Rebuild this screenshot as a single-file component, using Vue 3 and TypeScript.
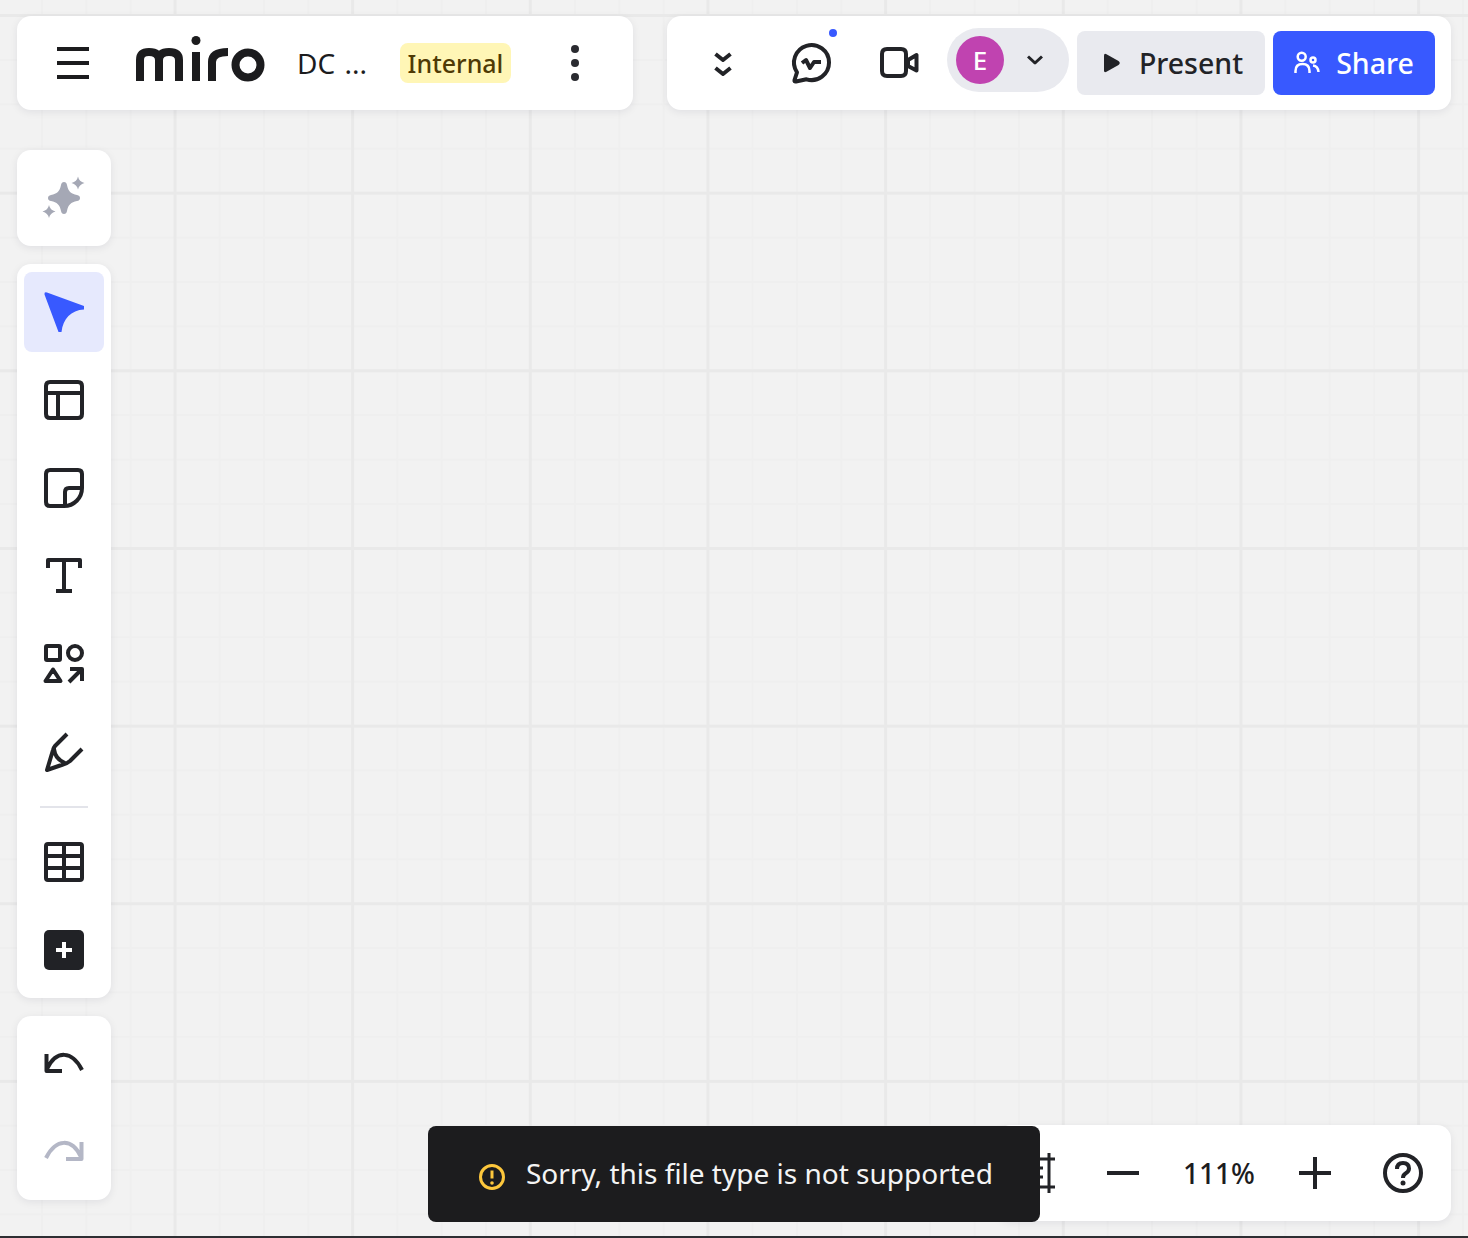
<script setup lang="ts">
interface Tool {
  id: string
  d: string
}

const tools: Tool[] = [
  { id: 'frame', d: 'M6 2H34Q38 2 38 6V34Q38 38 34 38H6Q2 38 2 34V6Q2 2 6 2ZM2 13H38M14 13V38' },
  { id: 'sticky', d: 'M6 2H34Q38 2 38 6V20C38 30 30 38 20 38H6Q2 38 2 34V6Q2 2 6 2ZM38 20H25Q21 20 21 24V38' },
  { id: 'text', d: 'M4 12V4H36V12M20 4V35M12 35H28' },
  { id: 'shapes', d: 'M3 2H15Q16 2 16 3V15Q16 16 15 16H3Q2 16 2 15V3Q2 2 3 2ZM38 9A7 7 0 1 1 24 9A7 7 0 1 1 38 9ZM9 25.5L16.5 37H1.5ZM25 38L38 25M26 25H38V37' },
  { id: 'pen', d: 'M23 2L11 14Q9.500 16 9 18L3 38L19 32.500Q23 31.500 26 29L38 17M10 17Q11 27 21 31' },
]
</script>

<template>
  <div class="board">
    <header class="top-row">
      <div class="panel board-bar">
        <svg class="menu-icon" width="48" height="48" viewBox="0 0 48 48">
          <path d="M8 10H40M8 24H40M8 38H40" />
        </svg>
        <svg class="logo" width="130" height="48" viewBox="0 0 130 48" role="img" aria-label="miro">
          <path d="M5 45V24Q5 16 14 16Q24 16 24 24V45M24 24Q24 16 34 16Q44 16 44 24V45M61 16V45M77 45V26Q77 16 93 16" />
          <circle cx="113" cy="29" r="12.5" />
          <circle class="logo-dot" cx="61" cy="4.5" r="4.5" />
        </svg>
        <span class="title">DC ...</span>
        <span class="badge">Internal</span>
        <svg class="dots" width="48" height="48" viewBox="0 0 48 48">
          <circle cx="24" cy="10" r="4" />
          <circle cx="24" cy="24" r="4" />
          <circle cx="24" cy="38" r="4" />
        </svg>
      </div>

      <div class="panel collab-bar">
        <div class="cell">
          <svg class="line-icon" width="48" height="48" viewBox="0 0 48 48">
            <path d="M16.500 15L24 21L31.500 15M16.500 29L24 35L31.500 29" />
          </svg>
        </div>
        <div class="cell">
          <svg class="line-icon" width="48" height="48" viewBox="0 0 48 48">
            <path d="M10 33.300A17.500 17.500 0 1 1 19.500 40.300L9 42.500Q7 43 7.500 41L10 33.300ZM15 24L19 21L23 29L27 23H34" />
          </svg>
          <span class="notify-dot"></span>
        </div>
        <div class="cell">
          <svg class="line-icon" width="48" height="48" viewBox="0 0 48 48">
            <path d="M12 10H26Q31 10 31 15V32Q31 37 26 37H12Q7 37 7 32V15Q7 10 12 10ZM33 21L41.500 16V31.500L33 27Z" />
          </svg>
        </div>
        <div class="user-pill">
          <span class="avatar">E</span>
          <svg class="line-icon small" width="16" height="10" viewBox="0 0 16 10">
            <path d="M1 1.5L8 8L15 1.5" />
          </svg>
        </div>
        <button class="btn present">
          <svg width="18" height="20" viewBox="0 0 18 20">
            <path d="M1 2.5Q1 0 3.500 1.200L15.500 8Q18 10 15.500 12L3.500 18.800Q1 20 1 17.500Z" />
          </svg>
          Present
        </button>
        <button class="btn share">
          <svg width="26" height="26" viewBox="0 0 26 26">
            <circle cx="7.700" cy="6.700" r="4" />
            <circle cx="19" cy="10" r="2.500" />
            <path d="M1.500 23V21Q1.500 14 8.500 14Q15.500 14 15.500 21V23M19 15.500Q24 16 24.500 22" />
          </svg>
          Share
        </button>
      </div>
    </header>

    <main class="canvas">
      <aside class="toolbars">
        <div class="panel tool-group">
          <div class="tool">
            <svg width="40" height="40" viewBox="0 0 40 40">
              <path
                fill="#a5a8b5"
                d="M20 4Q22.500 4 23 7C24 13 27 16 33 17Q36 17.500 36 20Q36 22.500 33 23C27 24 24 27 23 33Q22.500 36 20 36Q17.500 36 17 33C16 27 13 24 7 23Q4 22.500 4 20Q4 17.500 7 17C13 16 16 13 17 7Q17.500 4 20 4ZM34 -1.500Q35 3.500 40.500 5Q35 6.500 34 11.500Q33 6.500 27.500 5Q33 3.500 34 -1.500ZM5 27Q6 32 11.500 33.500Q6 35 5 40Q4 35 -1.500 33.500Q4 32 5 27Z"
              />
            </svg>
          </div>
        </div>

        <div class="panel tool-group">
          <div class="tool active">
            <svg width="40" height="40" viewBox="0 0 40 40">
              <path fill="#3859ff" d="M0.500 2.500Q0 -0.500 3 0.500L40 14V17.500C27 18 19 27 17.500 40H14.500Z" />
            </svg>
          </div>
          <div v-for="tool in tools" :key="tool.id" class="tool">
            <svg class="stroke-icon" width="40" height="40" viewBox="0 0 40 40">
              <path :d="tool.d" />
            </svg>
          </div>
          <div class="divider"></div>
          <div class="tool">
            <svg class="stroke-icon" width="40" height="40" viewBox="0 0 40 40">
              <path d="M4 2H36Q38 2 38 4V36Q38 38 36 38H4Q2 38 2 36V4Q2 2 4 2ZM2 14H38M2 26H38M20 2V38" />
            </svg>
          </div>
          <div class="tool">
            <svg width="40" height="40" viewBox="0 0 40 40">
              <rect width="40" height="40" rx="5" fill="#212226" />
              <path d="M12 20H28M20 12V28" stroke="#fff" stroke-width="4" />
            </svg>
          </div>
        </div>

        <div class="panel tool-group">
          <div class="tool">
            <svg class="stroke-icon" width="40" height="40" viewBox="0 0 40 40">
              <path d="M2.500 10V27H18M3 25C12 6 28 6 38 26" />
            </svg>
          </div>
          <div class="tool">
            <svg class="stroke-icon muted" width="40" height="40" viewBox="0 0 40 40">
              <path d="M37.500 10V27H22M37 25C28 6 12 6 2 26" />
            </svg>
          </div>
        </div>
      </aside>

      <div class="panel zoom-bar">
        <div class="zoom-cell fit">
          <svg class="line-icon thin" width="40" height="40" viewBox="0 0 40 40">
            <path d="M31 0V40M3 6H37M3 34H37M3 15H25M3 24H25" />
          </svg>
        </div>
        <div class="zoom-cell">
          <svg class="line-icon" width="40" height="40" viewBox="0 0 40 40">
            <path d="M4 20H36" />
          </svg>
        </div>
        <span class="zoom-value">111%</span>
        <div class="zoom-cell">
          <svg class="line-icon" width="40" height="40" viewBox="0 0 40 40">
            <path d="M4 20H36M20 4V36" />
          </svg>
        </div>
        <div class="zoom-cell">
          <svg class="line-icon" width="40" height="40" viewBox="0 0 40 40">
            <circle cx="20" cy="20" r="18" />
            <path d="M14 16Q14 10 20 10Q26 10 26 15.500Q26 18.500 22.500 20.500Q20 22 20 25" />
            <circle class="solid" cx="20" cy="30" r="2.500" />
          </svg>
        </div>
      </div>
    </main>

    <div class="toast">
      <svg width="28" height="28" viewBox="0 0 28 28">
        <circle cx="14" cy="14" r="11.500" />
        <path d="M14 7.500V15.500" />
        <circle class="solid" cx="14" cy="20" r="1.800" />
      </svg>
      <span>Sorry, this file type is not supported</span>
    </div>
  </div>
  <div class="edge"></div>
</template>

<style scoped>
.board {
  position: relative;
  width: 1468px;
  height: 1236px;
  box-sizing: border-box;
  padding: 16px 17px 15px;
  display: flex;
  flex-direction: column;
  overflow: hidden;
  font-family: "Noto Sans", sans-serif;
  color: #1c1c1e;
  background-color: #f2f2f2;
  background-image:
    linear-gradient(to right, #e9e9e9 3px, transparent 3px),
    linear-gradient(to bottom, #e9e9e9 3px, transparent 3px),
    linear-gradient(to right, #efefef 2px, transparent 2px),
    linear-gradient(to bottom, #efefef 2px, transparent 2px);
  background-size: 177.66px 177.66px, 177.66px 177.66px, 44.415px 44.415px, 44.415px 44.415px;
  background-position: 173.500px 0, 0 14px, 41px 0, 0 14.500px;
}

.edge {
  height: 2px;
  background: #2e2f33;
}

.panel {
  background: #fff;
  border-radius: 14px;
  box-shadow: 0 2px 8px rgba(5, 0, 56, 0.08);
}

.top-row {
  display: flex;
  justify-content: space-between;
}

.board-bar,
.collab-bar {
  height: 94px;
  display: flex;
  align-items: center;
}

.board-bar {
  width: 616px;
  padding-left: 32px;
  box-sizing: border-box;
}

.menu-icon path {
  stroke: #1c1c1e;
  stroke-width: 4;
  fill: none;
}

.logo {
  margin-left: 38px;
  margin-top: -7px;
  margin-right: 1px;
  overflow: visible;
}

.logo path,
.logo circle {
  fill: none;
  stroke: #1c1c1e;
  stroke-width: 8;
}

.logo .logo-dot {
  fill: #1c1c1e;
  stroke: none;
}

.title {
  width: 70px;
  margin-left: 31px;
  margin-right: 1px;
  font-size: 28px;
  word-spacing: 2px;
  white-space: nowrap;
}

.badge {
  margin-left: 32px;
  width: 111px;
  height: 40px;
  line-height: 40px;
  text-align: center;
  background: #fff6b6;
  border-radius: 8px;
  font-size: 25px;
  font-weight: 500;
  color: #4f3a05;
}

.dots {
  margin-left: 40px;
  fill: #2a2b30;
}

.collab-bar {
  width: 784px;
  padding: 0 16px;
  box-sizing: border-box;
  gap: 8px;
}

.cell {
  position: relative;
  flex: none;
  width: 80px;
  height: 80px;
  display: flex;
  align-items: center;
  justify-content: center;
}

.line-icon {
  fill: none;
  stroke: #222327;
  stroke-width: 4;
  stroke-linejoin: round;
}

.line-icon.small {
  stroke-width: 3;
}

.line-icon.thin {
  stroke-width: 3;
  overflow: visible;
}

.line-icon .solid {
  fill: #222327;
  stroke: none;
}

.notify-dot {
  position: absolute;
  left: 58px;
  top: 6px;
  width: 8px;
  height: 8px;
  border-radius: 50%;
  background: #3859ff;
}

.user-pill {
  flex: none;
  width: 122px;
  height: 64px;
  margin-bottom: 6px;
  box-sizing: border-box;
  padding-left: 9px;
  display: flex;
  align-items: center;
  gap: 23px;
  background: #e9eaef;
  border-radius: 32px;
}

.avatar {
  width: 48px;
  height: 48px;
  border-radius: 50%;
  background: #c043b0;
  color: #fff;
  font-size: 26px;
  font-weight: 500;
  line-height: 48px;
  text-align: center;
}

.btn {
  flex: none;
  height: 64px;
  border: none;
  border-radius: 8px;
  padding: 0;
  display: flex;
  align-items: center;
  justify-content: center;
  font-family: inherit;
  font-size: 28.500px;
  font-weight: 500;
}

.present {
  width: 188px;
  padding-left: 4px;
  box-sizing: border-box;
  gap: 18px;
  background: #e9eaef;
  color: #222327;
}

.present svg {
  fill: #222327;
}

.share {
  width: 162px;
  gap: 16px;
  background: #3859ff;
  color: #fff;
}

.share svg {
  fill: none;
  stroke: #fff;
  stroke-width: 2.500;
}

.canvas {
  flex: 1;
  margin-top: 40px;
  display: flex;
  justify-content: space-between;
  align-items: flex-end;
}

.toolbars {
  width: 94px;
  margin-bottom: 21px;
  display: flex;
  flex-direction: column;
  gap: 18px;
}

.tool-group {
  padding: 8px 7px;
  display: flex;
  flex-direction: column;
  gap: 8px;
}

.tool {
  height: 80px;
  border-radius: 8px;
  display: flex;
  align-items: center;
  justify-content: center;
}

.tool svg {
  overflow: visible;
}

.tool.active {
  background: #e6e9fd;
}

.stroke-icon {
  fill: none;
  stroke: #222327;
  stroke-width: 4;
  stroke-linejoin: round;
}

.stroke-icon.muted {
  stroke: #b4b7c6;
}

.divider {
  height: 2px;
  margin: 6px 16px;
  background: #e3e4ea;
}

.zoom-bar {
  width: 454px;
  height: 96px;
  box-sizing: border-box;
  padding-right: 4px;
  display: flex;
  align-items: center;
  justify-content: flex-end;
}

.zoom-cell {
  flex: none;
  width: 88px;
  display: flex;
  justify-content: center;
}

.zoom-cell.fit {
  width: 82px;
}

.zoom-value {
  flex: none;
  width: 104px;
  text-align: center;
  font-size: 28px;
  font-weight: 500;
  color: #1c1c1e;
}

.toast {
  position: absolute;
  left: 428px;
  top: 1126px;
  width: 612px;
  height: 96px;
  box-sizing: border-box;
  padding-left: 50px;
  display: flex;
  align-items: center;
  gap: 20px;
  background: #1c1c1e;
  border-radius: 8px;
  color: #f4f4f4;
  font-size: 28px;
}

.toast svg {
  flex: none;
  margin-top: 6px;
  fill: none;
  stroke: #fdc73c;
  stroke-width: 3;
}

.toast span {
  margin-top: -2px;
}

.toast .solid {
  fill: #fdc73c;
  stroke: none;
}
</style>
